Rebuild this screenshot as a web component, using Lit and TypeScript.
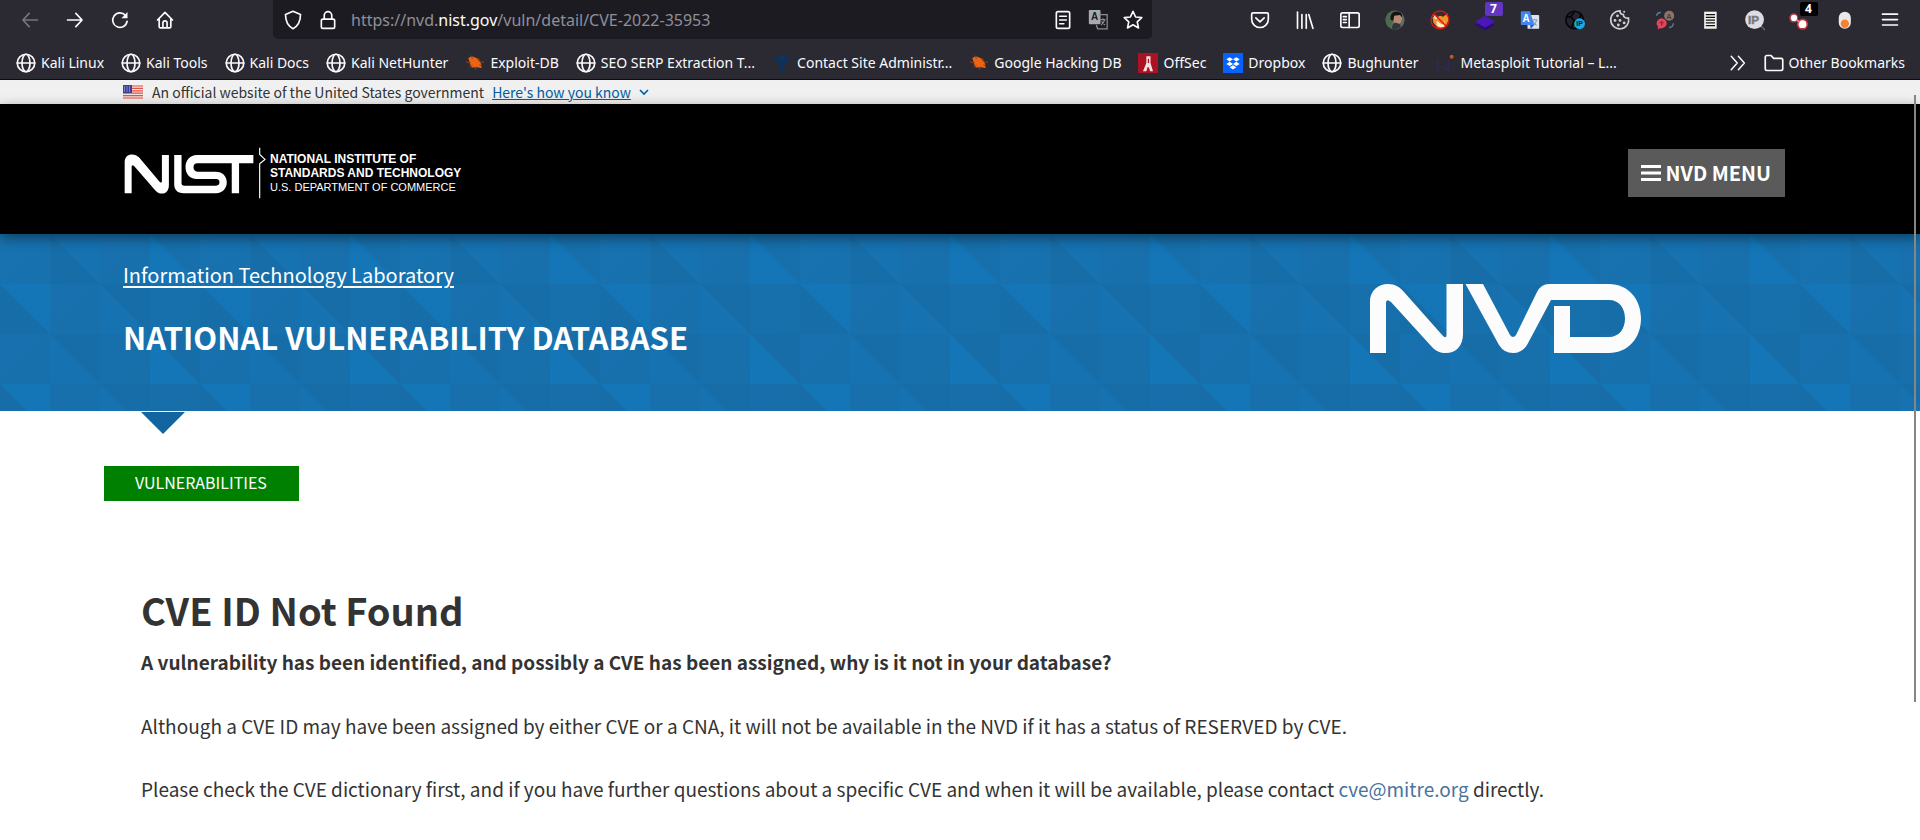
import { LitElement, html, css, svg, nothing } from "lit";
import { customElement, property } from "lit/decorators.js";

const icons: Record<string, unknown> = {
  back: svg`<path class="l" d="M21 12H3.500M11 4 3.500 12l7.500 8"/>`,
  forward: svg`<path class="l" d="M3 12h17.500M13 4l7.500 8-7.500 8"/>`,
  reload: svg`<path class="l" d="M20.500 13.500A8.700 8.700 0 1 1 18.500 6.500"/><path class="f" d="M21 2.500v7.300h-7.300z"/>`,
  home: svg`<path class="l" d="M3 12 12 2.800l9 9.200M5 10.500V20a1.500 1.500 0 0 0 1.500 1.500h11A1.500 1.500 0 0 0 19 20v-9.500M9.500 21v-5.500a2.500 2.500 0 0 1 5 0V21"/>`,
  shield: svg`<path class="l" d="M12 1.500 21 5.500C21 13 19 18.800 12 22.500 5 18.800 3 13 3 5.500z"/>`,
  lock: svg`<rect class="l" x="4" y="11" width="16" height="11" rx="2"/><path class="l" d="M7.500 11V6.500a4.500 4.500 0 0 1 9 0V11"/>`,
  reader: svg`<rect class="l" x="4" y="2" width="16" height="20" rx="2"/><path class="l" d="M8 7.500h8M8 12h8M8 16.500h5"/>`,
  translate: svg`<rect x="1" y="0" width="14" height="17" rx="1" fill="#a9a9ae"/><text x="3.500" y="12.500" font-family="Liberation Sans" font-weight="700" font-size="12" fill="#1c1b22">A</text><path d="M13 5.500h10v17H11.500L10 18" fill="none" stroke="#8d8d93" stroke-width="1.500"/><path d="M15 11.500h6M18 10v1.500M20 11.500c-.5 3-2 5-4.500 6.500M16.500 13.500c1 2 2 3.500 4 4.500" fill="none" stroke="#8d8d93" stroke-width="1.300"/>`,
  star: svg`<path class="l" d="m12 1.500 3.100 6.900 7.400.8-5.400 5 1.500 7.300L12 17.800l-6.600 3.700 1.500-7.300-5.400-5 7.400-.8z"/>`,
  pocket: svg`<path class="l" d="M3.500 3.500h17A1.500 1.500 0 0 1 22 5v6a10 10 0 0 1-20 0V5a1.500 1.500 0 0 1 1.500-1.500z"/><path class="l" d="m7 9.500 5 4.800 5-4.800"/>`,
  library: svg`<path class="l" d="M3 2.500V22M8.300 5.500V22M13.500 5.500V22M16.500 5.500 21.500 22"/>`,
  sidebar: svg`<rect class="l" x="1" y="3.500" width="22" height="17.500" rx="2"/><path class="l" d="M11 3.500V21M4 8h3.500M4 11.500h3.500M4 15h3.500"/>`,
  avatar: svg`<circle cx="12" cy="12" r="11.500" fill="#5d6f60"/><path d="M1 9C4 3 8 1 13 .6c-4 3-4 14-6 20.900C3 19 0 15 1 9z" fill="#4c6a52"/><ellipse cx="15" cy="10" rx="5.500" ry="7" fill="#b98a72"/><path d="M7 12C5 4 11 .5 16 2c4 1 5 4 4.500 7L18 6l-7 1-1 6z" fill="#17130f"/><path d="M8 22c1-5 3-7 6-6.500 3 .5 5 1.500 5 4.500-3 3-8 4-11 2z" fill="#31353b"/>`,
  fox: svg`<circle cx="12" cy="12" r="10" fill="#3a2a30"/><path d="M3 8l5 1 4-2 4 1 5-4 1 9-4 8H9l-5-6z" fill="#f39226"/><path d="M4 6l4 1 2 3-4 1zM8 13l4 3 6-4-1 8-5 1-4-3z" fill="#ffe9cf"/><path d="M11 12l3 2 4-3-1 6h-4z" fill="#f39226"/><circle cx="12" cy="12" r="10.800" fill="none" stroke="#d31912" stroke-width="1.700"/><path d="m4.500 4.500 15 15" stroke="#d31912" stroke-width="1.700"/>`,
  layers: svg`<path d="m12 12 12 6-12 6.500L0 18z" fill="#2a0b78"/><path d="m12 7 12 7-12 7L0 14z" fill="#4a17b8"/>`,
  gtranslate: svg`<rect x="9" y="6" width="14" height="16.500" rx="1" fill="#dfe3e8"/><path d="M14 12h7M17.500 10.500V12M20 12c-.6 3-2 5-4 6.500M15.500 13.500c1 2 2.500 4 4.500 5" fill="none" stroke="#7f9fc9" stroke-width="1.300"/><path d="M2 1.500h10L17 18H2a1 1 0 0 1-1-1V2.500a1 1 0 0 1 1-1z" fill="#4385f0"/><text x="3" y="14" font-family="Liberation Sans" font-weight="700" font-size="12" fill="#fff">A</text><path d="m12 18 5 0-4 4.500z" fill="#1f5fc4"/>`,
  ipball: svg`<circle cx="11.500" cy="12" r="10.500" fill="#25242c" stroke="#060608" stroke-width="2"/><path d="M11 2 7 8l4 5 6-1 2-7M7 8 1 9M11 13l-3 8" fill="none" stroke="#060608" stroke-width="2"/><circle cx="17.500" cy="16.500" r="6.500" fill="#18a9e6"/><text x="13.500" y="19.800" font-family="Liberation Sans" font-weight="700" font-size="8.500" fill="#0a1d2b">IP</text>`,
  cookie: svg`<path d="M12 1c0 3 1.500 4.500 4 4.500 0 3 2.500 4.500 6.300 4.300A10.800 10.800 0 1 1 12 1z" fill="#2b2a33" stroke="#cfcfd3" stroke-width="2"/><circle cx="17" cy="2" r="1.200" fill="#cfcfd3"/><g fill="#cfcfd3"><circle cx="9" cy="7" r="1.700"/><circle cx="6" cy="12.500" r="1.700"/><circle cx="12" cy="12.500" r="1.700"/><circle cx="10" cy="18" r="1.700"/><circle cx="17" cy="15.500" r="1.700"/></g>`,
  chat: svg`<circle cx="17" cy="7" r="6" fill="#8b756a"/><text x="13.500" y="10.300" font-family="Liberation Sans" font-weight="700" font-size="9" fill="#4b3b34">A</text><path d="M8 10a7 6 0 1 1-2 12l-3 1 .8-3A7 6 0 0 1 8 10z" fill="#e2465c"/><path d="M8 13v6M5.500 15h5" stroke="#9d2237" stroke-width="1.500"/><path d="M2 7c0-3 2-4 5-4M22 16c0 4-2 5-5 5" fill="none" stroke="#4a8ba0" stroke-width="1.600"/>`,
  page: svg`<rect x="5" y="2" width="15" height="20.500" fill="#f1f1ee"/><path d="M7 5.500h11M7 8.800h11M7 12.100h11M7 15.400h11M7 18.700h11" stroke="#111" stroke-width="1.600"/>`,
  ip: svg`<path d="m17 17 7 7" stroke="#6d6d74" stroke-width="1.500"/><circle cx="11.500" cy="11.500" r="11.300" fill="#dcdde0"/><text x="3.500" y="16.500" font-family="Liberation Sans" font-weight="700" font-size="14" stroke="#77787d" stroke-width=".6" fill="#77787d">IP</text>`,
  dots: svg`<circle cx="4.500" cy="9.500" r="5.500" fill="#e0455a" opacity=".75"/><circle cx="4.800" cy="9.500" r="3.700" fill="#fff"/><circle cx="15" cy="17" r="6.800" fill="#e0343c" opacity=".85"/><circle cx="15" cy="17" r="4.700" fill="#fff"/><path d="m8 12 4 2.500" stroke="#e88" stroke-width="2"/>`,
  toggle: svg`<rect x="4.500" y="2" width="14.500" height="20.500" rx="7.200" fill="#e9e9ea"/><circle cx="11.800" cy="16.500" r="5" fill="#f58233"/>`,
  menu: svg`<path class="l" d="M3 5h18M3 11.500h18M3 18h18"/>`,
  globe: svg`<circle class="l" cx="12" cy="12" r="10.500"/><ellipse class="l" cx="12" cy="12" rx="4.800" ry="10.500"/><path class="l" d="M1.500 12h21"/>`,
  bug: svg`<path d="m4 6 4-2 6 2 5 6 1 6-6-1-6 .5-2-4.500z" fill="#ee6413"/><path d="m1 11 6 0M7 3l2 4M16 6l2 5h5M5 16l4-1M12 20l2-4M20 16l-3-2" stroke="#8b431d" stroke-width="1.200" fill="none"/>`,
  mark: svg`<path d="M2 7l4-3h12l4 3-5 5-2 1v9H9v-9l-2-1z" fill="#10305c"/><circle cx="12" cy="5" r="3.500" fill="#173257"/>`,
  offsec: svg`<path fill="#ab1224" d="M0 0h24v24H0z"/><path d="M10 4h5v8l3 10h-3.500l-1.500-5h-1.500L10 22H6l4-10z" fill="#f4dfe0"/><path d="M12.500 7v5" stroke="#ab1224" stroke-width="1.500"/>`,
  dropbox: svg`<path fill="#0661fd" d="M0 0h24v24H0z"/><path fill="#fff" d="m8 5 4 2.600-4 2.600-4-2.600zM16 5l4 2.600-4 2.600-4-2.600zM8 10.500l4 2.600-4 2.600-4-2.600zM16 10.500l4 2.600-4 2.600-4-2.600zM12 14.800l4 2.400-4 2.600-4-2.600z"/>`,
  meta: svg`<path d="M3 8v12h3M16 8v12h-3M7 12h1M12 12h1M7 16c2 1.500 4 1.500 6 0" fill="none" stroke="#33275c" stroke-width="1.800"/><circle cx="20" cy="4.500" r="2.400" fill="#c9561c"/>`,
  chevrons: svg`<path class="l" d="m3 3 8 9-8 9M12.500 3l8 9-8 9"/>`,
  folder: svg`<path class="l" d="M1.500 19V5A2 2 0 0 1 3.500 3h5l3 3.500h9a2 2 0 0 1 2 2V19a2 2 0 0 1-2 2h-17a2 2 0 0 1-2-2z"/>`,
};

@customElement("ui-icon")
class UiIcon extends LitElement {
  @property() name = "";
  @property({ type: Number }) size = 20;
  static styles = css`
    :host { display: inline-flex; flex: none; }
    svg { display: block; overflow: visible; }
    .l { fill: none; stroke: currentColor; stroke-width: 2; stroke-linecap: round; stroke-linejoin: round; }
    .f { fill: currentColor; }
  `;
  render() {
    return html`<svg width=${this.size} height=${this.size} viewBox="0 0 24 24" aria-hidden="true">${icons[this.name]}</svg>`;
  }
}

interface Tool { icon: string; label: string; badge?: string; dark?: boolean; }

const navTools: Tool[] = [
  { icon: "back", label: "Back" },
  { icon: "forward", label: "Forward" },
  { icon: "reload", label: "Reload" },
  { icon: "home", label: "Home" },
];

const extensions: Tool[] = [
  { icon: "pocket", label: "Save to Pocket" },
  { icon: "library", label: "Library" },
  { icon: "sidebar", label: "Sidebars" },
  { icon: "avatar", label: "Account" },
  { icon: "fox", label: "Proxy switcher" },
  { icon: "layers", label: "Technology profiler", badge: "7" },
  { icon: "gtranslate", label: "Translate" },
  { icon: "ipball", label: "IP details" },
  { icon: "cookie", label: "Cookie editor" },
  { icon: "chat", label: "Chat translator" },
  { icon: "page", label: "Page notes" },
  { icon: "ip", label: "IP lookup" },
  { icon: "dots", label: "Request tracker", badge: "4", dark: true },
  { icon: "toggle", label: "Toggle" },
  { icon: "menu", label: "Open application menu" },
];

const bookmarks: [string, string][] = [
  ["globe", "Kali Linux"],
  ["globe", "Kali Tools"],
  ["globe", "Kali Docs"],
  ["globe", "Kali NetHunter"],
  ["bug", "Exploit-DB"],
  ["globe", "SEO SERP Extraction T..."],
  ["mark", "Contact Site Administr..."],
  ["bug", "Google Hacking DB"],
  ["offsec", "OffSec"],
  ["dropbox", "Dropbox"],
  ["globe", "Bughunter"],
  ["meta", "Metasploit Tutorial – L..."],
];

@customElement("browser-chrome")
class BrowserChrome extends LitElement {
  static styles = css`
    :host { display: block; background: #2b2a33; color: #fbfbfe; font-family: "Noto Sans", "Open Sans", sans-serif; border-bottom: 1px solid #0d0c12; }
    button { font: inherit; color: inherit; background: none; border: 0; padding: 0; }
    .toolbar { display: flex; height: 39px; padding: 0 8px 0 7px; }
    .tool { position: relative; width: 45px; height: 39px; display: flex; align-items: center; justify-content: center; }
    .tool:disabled { color: #77767e; }
    .badge { position: absolute; left: 50%; top: 2px; width: 18px; height: 14px; border-radius: 2px; background: #6236c0; color: #fff; font: 700 12px/14px "Open Sans", sans-serif; text-align: center; }
    .badge.dark { background: #000; }
    .url { flex: 1; margin: 0 85px 0 86px; padding: 0 9px 0 10px; display: flex; align-items: center; gap: 15px; background: #1c1b22; border-radius: 0 0 5px 5px; }
    .address { flex: 1; font-size: 16px; line-height: 24px; color: #8f8f9a; margin-left: -2px; white-space: nowrap; }
    .address b { font-weight: 400; color: #fbfbfe; }
    .marks { display: flex; align-items: center; height: 40px; padding: 7px 15px 0 16px; gap: 17px; font-size: 14px; line-height: 20px; box-sizing: border-box; }
    .mark { display: flex; align-items: center; gap: 5px; color: inherit; text-decoration: none; white-space: nowrap; }
    .more { margin-left: auto; display: flex; }
  `;
  private tool(t: Tool) {
    return html`<button class="tool" aria-label=${t.label} ?disabled=${t.icon === "back"}>
      <ui-icon name=${t.icon} size="20"></ui-icon>
      ${t.badge ? html`<span class="badge ${t.dark ? "dark" : ""}">${t.badge}</span>` : nothing}
    </button>`;
  }
  render() {
    return html`
      <div class="toolbar">
        ${navTools.map((t) => this.tool(t))}
        <div class="url">
          <ui-icon name="shield"></ui-icon>
          <ui-icon name="lock"></ui-icon>
          <div class="address" role="textbox" aria-label="Address" tabindex="0">https://nvd.<b>nist.gov</b>/vuln/detail/CVE-2022-35953</div>
          <ui-icon name="reader"></ui-icon>
          <ui-icon name="translate"></ui-icon>
          <ui-icon name="star"></ui-icon>
        </div>
        ${extensions.map((t) => this.tool(t))}
      </div>
      <nav class="marks" aria-label="Bookmarks">
        ${bookmarks.map(([icon, text]) => html`<a class="mark" href="#"><ui-icon name=${icon}></ui-icon>${text}</a>`)}
        <button class="more" aria-label="More bookmarks"><ui-icon name="chevrons" size="18"></ui-icon></button>
        <a class="mark" href="#"><ui-icon name="folder"></ui-icon>Other Bookmarks</a>
      </nav>
    `;
  }
}

@customElement("app-root")
class AppRoot extends LitElement {
  static styles = css`
    :host { display: block; position: relative; min-height: 100vh; overflow: hidden; background: #fff; color: #333; font-family: "Noto Sans CJK SC", "Open Sans", sans-serif; }
    h1, h2, p { margin: 0; }
    .banner { display: flex; align-items: center; height: 24px; padding: 0 135px 0 123px; background: #f0f0f0; font-size: 14px; line-height: 20px; }
    .flag { flex: none; margin-right: 9px; }
    .banner a { margin-left: 8px; color: #005ea2; }
    .banner .caret { margin-left: 8px; }
    .header { position: relative; display: flex; align-items: center; justify-content: space-between; height: 130px; padding: 8px 135px 0 123px; box-sizing: border-box; background: #000; color: #fff; box-shadow: 0 4px 12px rgba(0, 0, 0, 0.45); }
    .brand { display: flex; align-items: center; gap: 4px; color: #fff; text-decoration: none; }
    .org { display: block; font: 700 12px/14px "Liberation Sans Narrow", "Liberation Sans", sans-serif; white-space: nowrap; }
    .org span { display: block; }
    .org .dept { font-weight: 400; font-size: 11px; }
    .menu { display: flex; align-items: center; gap: 5px; height: 48px; padding: 0 14px 0 13px; border: 0; background: #5a5a5a; color: #fff; font: 700 20px/28px "Noto Sans CJK SC", sans-serif; }
    .hero { display: flex; justify-content: space-between; align-items: flex-start; height: 177px; padding: 26px 279px 0 123px; box-sizing: border-box; color: #fff;
      background: #176fab url("data:image/svg+xml,%3Csvg xmlns='http://www.w3.org/2000/svg' width='200' height='200'%3E%3Cdefs%3E%3ClinearGradient id='m' x2='1' y2='1'%3E%3Cstop stop-color='%231772af'/%3E%3Cstop offset='1' stop-color='%23176ea9'/%3E%3C/linearGradient%3E%3C/defs%3E%3Cpath fill='url(%23m)' d='M0 0h50v50H0zM100 0h50v50h-50zM50 50h50v50H50zM150 50h50v50h-50zM0 100h50v50H0zM100 100h50v50h-50zM50 150h50v50H50zM150 150h50v50h-50z'/%3E%3Cpath fill='%231475b7' d='M150 0v50h50zM0 50h50v50zM150 100v50h50zM0 150h50v50z'/%3E%3Cpath fill='%231672b0' d='M50 0h50v50zM100 50v50h50zM50 100v50h50zM100 150v50h50z'/%3E%3Cpath fill='%23176da8' d='M50 0v50h50zM100 50h50v50zM50 100h50v50zM0 50v50h50zM150 100h50v50zM100 150h50v50zM0 150v50h50z'/%3E%3C/svg%3E") 0 0 / 200px 200px; }
    .titles { display: grid; gap: 31px; }
    .lab { color: #fff; font-size: 20px; line-height: 30px; text-underline-offset: 3px; }
    .hero h1 { font-size: 31px; line-height: 32px; font-weight: 700; }
    .nvd { margin-top: 24px; flex: none; }
    .pointer { display: block; margin: 1px 0 32px 141px; }
    .section { display: inline-block; margin-left: 104px; padding: 0 32px 2px 31px; background: #008000; color: #fff; font-size: 16px; line-height: 33px; text-decoration: none; }
    .content { padding: 84px 135px 0 141px; font-size: 19px; line-height: 32px; }
    .content h2 { font-size: 38px; line-height: 50px; font-weight: 700; }
    .lead { padding: 11px 0 32px; font-weight: 700; }
    .content p + p { margin-bottom: 31px; }
    .content a { color: #49749c; text-decoration: none; }
    .scroll { position: absolute; right: 4px; top: 95px; width: 2px; height: 607px; background: #868686; }
  `;
  render() {
    return html`
      <browser-chrome></browser-chrome>
      <div class="banner">
        <svg class="flag" width="20" height="14" viewBox="0 0 20 14" aria-hidden="true">
          <path fill="#f7e4e0" d="M0 0h20v14H0z" />
          <path stroke="#dd5548" stroke-width="1.200" d="M0 1h20M0 3.400h20M0 5.800h20M0 8.200h20M0 10.600h20M0 13h20" />
          <path fill="#3b3f97" d="M0 0h9v8H0z" />
          <path stroke="#c3c6e8" stroke-dasharray="1 1.500" d="M1 2h7M1 4h7M1 6h7" />
        </svg>
        <span>An official website of the United States government</span>
        <a href="#">Here's how you know </a>
        <svg class="caret" width="10" height="8" viewBox="0 0 10 8" aria-hidden="true"><path d="m1 2 4 4 4-4" fill="none" stroke="#005ea2" stroke-width="1.600" /></svg>
      </div>
      <header class="header">
        <a class="brand" href="#" aria-label="NIST home">
          <svg width="143" height="52" viewBox="70 76 430 156" aria-hidden="true">
            <g fill="#fff">
              <path d="M75 215V122C75 105 85 98 97 98C106 98 112 101 118 107L180 180Q187 186 187 178V100H208V190C208 206 200 216 188 216C178 216 172 212 166 205L104 134Q96 126 96 136V215Z" />
              <path d="M224 100H246V185Q246 192 254 192H350Q360 192 360 182T350 172H292C270 172 258 156 258 136S272 100 292 100H462V125H419V215H397V125H294Q282 125 282 137T294 150H348C370 150 382 164 382 182S370 215 350 215H252C234 215 224 205 224 188Z" />
            </g>
            <path d="M481 78V98L497 113L481 126V230" fill="none" stroke="#fff" stroke-width="3.500" />
          </svg>
          <span class="org">
            <span>NATIONAL INSTITUTE OF</span>
            <span>STANDARDS AND TECHNOLOGY</span>
            <span class="dept">U.S. DEPARTMENT OF COMMERCE</span>
          </span>
        </a>
        <button class="menu">
          <svg width="20" height="18" viewBox="0 0 20 18" aria-hidden="true"><path d="M0 2.500h20M0 9h20M0 15.500h20" stroke="#fff" stroke-width="3.200" /></svg>
          NVD MENU
        </button>
      </header>
      <section class="hero">
        <div class="titles">
          <a class="lab" href="#">Information Technology Laboratory</a>
          <h1>NATIONAL VULNERABILITY DATABASE</h1>
        </div>
        <svg class="nvd" width="271" height="69" viewBox="0 0 271 69" role="img" aria-label="NVD">
          <g fill="#fcfcfc">
            <path d="M0 69V17C0 7 8 0 18 0C25 0 30 3 34 8L73 52Q76.500 55 76.500 51V0H93V50C93 62 86 69 76 69C70 69 66 67 62 63L21 18Q16 14 16 19V69Z" />
            <path d="M95.500 0H113L140 51Q143 55 146 51L167 8Q171 0 179 0H239C258 0 271 15 271 34.500S258 69 239 69H184V22H200V53H239C249 53 255 45 255 34.500S249 16 239 16H181L157 61Q152 69 143 69T129 61Z" />
          </g>
        </svg>
      </section>
      <svg class="pointer" width="44" height="22" viewBox="0 0 44 22" aria-hidden="true"><path d="M0 0h44L22 22z" fill="#12659f" /></svg>
      <a class="section" href="#">VULNERABILITIES</a>
      <main class="content">
        <h2>CVE ID Not Found</h2>
        <p class="lead">A vulnerability has been identified, and possibly a CVE has been assigned, why is it not in your database?</p>
        <p>Although a CVE ID may have been assigned by either CVE or a CNA, it will not be available in the NVD if it has a status of RESERVED by CVE.</p>
        <p>Please check the CVE dictionary first, and if you have further questions about a specific CVE and when it will be available, please contact <a href="mailto:cve@mitre.org">cve@mitre.org</a> directly.</p>
      </main>
      <div class="scroll" aria-hidden="true"></div>
    `;
  }
}
